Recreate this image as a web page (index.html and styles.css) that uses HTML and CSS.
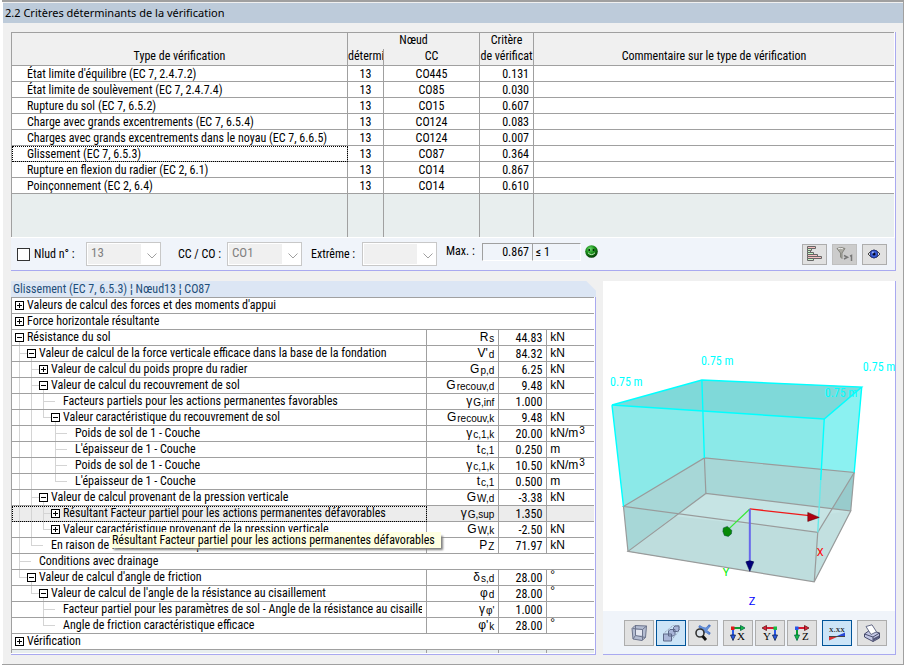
FILE: index.html
```html
<!DOCTYPE html>
<html lang="fr">
<head>
<meta charset="utf-8">
<title>2.2 Critères déterminants de la vérification</title>
<link rel="stylesheet" href="styles.css">
</head>
<body>
<div class="window">
<h1 class="titlebar">2.2 Critères déterminants de la vérification</h1>
<main class="content">

<section class="panel summary">
<table class="grid criteria">
<colgroup><col class="c-type"><col class="c-node"><col class="c-cc"><col class="c-crit"><col></colgroup>
<thead>
<tr><th rowspan="2">Type de vérification</th><th colspan="2" class="top">Nœud</th><th class="top">Critère</th><th rowspan="2">Commentaire sur le type de vérification</th></tr>
<tr><th>détermi</th><th>CC</th><th>de vérificat</th></tr>
</thead>
<tbody>
<tr><td>État limite d'équilibre (EC 7, 2.4.7.2)</td><td>13</td><td>CO445</td><td>0.131</td><td></td></tr>
<tr><td>État limite de soulèvement (EC 7, 2.4.7.4)</td><td>13</td><td>CO85</td><td>0.030</td><td></td></tr>
<tr><td>Rupture du sol (EC 7, 6.5.2)</td><td>13</td><td>CO15</td><td>0.607</td><td></td></tr>
<tr><td>Charge avec grands excentrements (EC 7, 6.5.4)</td><td>13</td><td>CO124</td><td>0.083</td><td></td></tr>
<tr><td>Charges avec grands excentrements dans le noyau (EC 7, 6.6.5)</td><td>13</td><td>CO124</td><td>0.007</td><td></td></tr>
<tr><td class="focus">Glissement (EC 7, 6.5.3)</td><td>13</td><td>CO87</td><td>0.364</td><td></td></tr>
<tr><td>Rupture en flexion du radier (EC 2, 6.1)</td><td>13</td><td>CO14</td><td>0.867</td><td></td></tr>
<tr><td>Poinçonnement (EC 2, 6.4)</td><td>13</td><td>CO14</td><td>0.610</td><td></td></tr>
<tr class="filler"><td></td><td></td><td></td><td></td><td></td></tr>
</tbody>
</table>
<div class="filterbar">
<label class="check"><input type="checkbox">Nlud n° :</label>
<span class="combo"><select disabled aria-label="Nœud"><option>13</option></select><svg width="10" height="6" viewBox="0 0 10 6"><path d="M.5.5 5 5 9.500.5"/></svg></span>
<label class="cc-label" for="cc">CC / CO :</label>
<span class="combo"><select id="cc" disabled><option>CO1</option></select><svg width="10" height="6" viewBox="0 0 10 6"><path d="M.5.5 5 5 9.500.5"/></svg></span>
<label class="ext-label" for="ext">Extrême :</label>
<span class="combo"><select id="ext" disabled><option></option></select><svg width="10" height="6" viewBox="0 0 10 6"><path d="M.5.5 5 5 9.500.5"/></svg></span>
<div class="maximum">
<span class="max-label">Max. :</span>
<output class="max-value">0.867</output><output class="max-limit">≤ 1</output>
<svg class="smiley" width="13" height="13" viewBox="0 0 13 13"><defs><radialGradient id="sm" cx=".4" cy=".3" r=".7"><stop offset="0" stop-color="#6cd86c"/><stop offset=".5" stop-color="#1a901a"/><stop offset="1" stop-color="#053c05"/></radialGradient></defs><circle cx="6.500" cy="6.500" r="6.300" fill="url(#sm)"/><path d="M3.500 4h1.500v2H3.500zM7.800 4h1.500v2H7.800z" fill="#0a2a0a"/><path d="M3 7.800q3.500 3.600 7 0" fill="none" stroke="#c8f0c0" stroke-width="1"/></svg>
</div>
<div class="actions">
<button type="button" aria-label="Diagramme"><svg width="16" height="16" viewBox="0 0 16 16"><g stroke="#666" stroke-width="1"><path d="M1.500.5h8v2h-8z" fill="#f6c0c0"/><path d="M1.500 2.500h4v2h-4z" fill="#c5f5c5"/><path d="M1.500 4.500h3v2h-3z" fill="#c5f5c5"/><path d="M1.500 6.500h6v2h-6z" fill="#c5f5c5"/><path d="M1.500 8.500h10v2h-10z" fill="#f6c0c0"/><path d="M1.500 10.500h14v2h-14z" fill="#f6c0c0"/><path d="M1.500 12.500h6v2h-6z" fill="#c5f5c5"/></g></svg></button>
<button type="button" class="off" disabled aria-label="Filtre"><svg width="17" height="16" viewBox="0 0 17 16"><path d="M1 2.500q4-2 8 0L6 7v5.500L4.500 11V7z" fill="#aaa9a2" stroke="#85857e"/><path d="M2 2.800q3-1 5 0" stroke="#eee" fill="none"/><path d="M8 9.500l3.500 1.700L8 13M14 10.200l1.500-.8V15" fill="none" stroke="#777" stroke-width="1.500"/></svg></button>
<button type="button" aria-label="Afficher"><svg width="14" height="12" viewBox="0 0 14 12"><path d="M1 6q6-8 12 0-6 8-12 0z" fill="#f4f4f0" stroke="#444" stroke-width="1"/><circle cx="7" cy="6" r="3.800" fill="#3c60d8" stroke="#1d3290"/><circle cx="7" cy="6" r="1.500" fill="#050520"/><circle cx="5.800" cy="4.600" r="1" fill="#9db8ff"/></svg></button>
</div>
</div>
</section>

<section class="details">
<h2 class="caption">Glissement (EC 7, 6.5.3) ¦ Nœud13 ¦ CO87</h2>
<div class="panel tree-panel">
<table class="grid tree">
<colgroup><col><col class="c-sym"><col class="c-val"><col class="c-unit"></colgroup>
<tbody>
<tr><td colspan="4"><div class="node"><button class="tg plus" aria-label="Développer"></button><span>Valeurs de calcul des forces et des moments d'appui</span></div></td></tr>
<tr><td colspan="4"><div class="node"><button class="tg plus" aria-label="Développer"></button><span>Force horizontale résultante</span></div></td></tr>
<tr><td><div class="node"><button class="tg minus" aria-label="Réduire"></button><span>Résistance du sol</span></div></td><td>R<sub>s</sub></td><td>44.83</td><td>kN</td></tr>
<tr><td><div class="node"><i class="mid"></i><button class="tg minus" aria-label="Réduire"></button><span>Valeur de calcul de la force verticale efficace dans la base de la fondation</span></div></td><td>V'<sub>d</sub></td><td>84.32</td><td>kN</td></tr>
<tr><td><div class="node"><i class="line"></i><i class="mid"></i><button class="tg plus" aria-label="Développer"></button><span>Valeur de calcul du poids propre du radier</span></div></td><td>G<sub>p,d</sub></td><td>6.25</td><td>kN</td></tr>
<tr><td><div class="node"><i class="line"></i><i class="mid"></i><button class="tg minus" aria-label="Réduire"></button><span>Valeur de calcul du recouvrement de sol</span></div></td><td>G<sub>recouv,d</sub></td><td>9.48</td><td>kN</td></tr>
<tr><td><div class="node"><i class="line"></i><i class="line"></i><i class="mid"></i><i></i><span>Facteurs partiels pour les actions permanentes favorables</span></div></td><td>γ<sub>G,inf</sub></td><td>1.000</td><td></td></tr>
<tr><td><div class="node"><i class="line"></i><i class="line"></i><i class="end"></i><button class="tg minus" aria-label="Réduire"></button><span>Valeur caractéristique du recouvrement de sol</span></div></td><td>G<sub>recouv,k</sub></td><td>9.48</td><td>kN</td></tr>
<tr><td><div class="node"><i class="line"></i><i class="line"></i><i></i><i class="mid"></i><i></i><span>Poids de sol de 1 - Couche</span></div></td><td>γ<sub>c,1,k</sub></td><td>20.00</td><td>kN/m<sup>3</sup></td></tr>
<tr><td><div class="node"><i class="line"></i><i class="line"></i><i></i><i class="mid"></i><i></i><span>L'épaisseur de 1 - Couche</span></div></td><td>t<sub>c,1</sub></td><td>0.250</td><td>m</td></tr>
<tr><td><div class="node"><i class="line"></i><i class="line"></i><i></i><i class="mid"></i><i></i><span>Poids de sol de 1 - Couche</span></div></td><td>γ<sub>c,1,k</sub></td><td>10.50</td><td>kN/m<sup>3</sup></td></tr>
<tr><td><div class="node"><i class="line"></i><i class="line"></i><i></i><i class="end"></i><i></i><span>L'épaisseur de 1 - Couche</span></div></td><td>t<sub>c,1</sub></td><td>0.500</td><td>m</td></tr>
<tr><td><div class="node"><i class="line"></i><i class="mid"></i><button class="tg minus" aria-label="Réduire"></button><span>Valeur de calcul provenant de la pression verticale</span></div></td><td>G<sub>W,d</sub></td><td>-3.38</td><td>kN</td></tr>
<tr class="selected"><td class="focus"><div class="node"><i class="line"></i><i class="line"></i><i class="mid"></i><button class="tg plus" aria-label="Développer"></button><span>Résultant Facteur partiel pour les actions permanentes défavorables</span></div></td><td>γ<sub>G,sup</sub></td><td>1.350</td><td></td></tr>
<tr><td><div class="node"><i class="line"></i><i class="line"></i><i class="end"></i><button class="tg plus" aria-label="Développer"></button><span>Valeur caractéristique provenant de la pression verticale</span></div><div class="tooltip" role="tooltip">Résultant Facteur partiel pour les actions permanentes défavorables</div></td><td>G<sub>W,k</sub></td><td>-2.50</td><td>kN</td></tr>
<tr><td><div class="node"><i class="line"></i><i class="end"></i><i></i><span>En raison de l'effort normal du poteau</span></div></td><td>P<sub>Z</sub></td><td>71.97</td><td>kN</td></tr>
<tr><td colspan="4"><div class="node"><i class="mid"></i><i></i><span>Conditions avec drainage</span></div></td></tr>
<tr><td><div class="node"><i class="end"></i><button class="tg minus" aria-label="Réduire"></button><span>Valeur de calcul d'angle de friction</span></div></td><td>δ<sub>s,d</sub></td><td>28.00</td><td><span class="deg">°</span></td></tr>
<tr><td><div class="node"><i></i><i class="end"></i><button class="tg minus" aria-label="Réduire"></button><span>Valeur de calcul de l'angle de la résistance au cisaillement</span></div></td><td>φ<sub>d</sub></td><td>28.00</td><td><span class="deg">°</span></td></tr>
<tr><td><div class="node"><i></i><i></i><i class="mid"></i><i></i><span>Facteur partiel pour les paramètres de sol - Angle de la résistance au cisaillement</span></div></td><td>γ<sub>φ'</sub></td><td>1.000</td><td></td></tr>
<tr><td><div class="node"><i></i><i></i><i class="end"></i><i></i><span>Angle de friction caractéristique efficace</span></div></td><td>φ'<sub>k</sub></td><td>28.00</td><td><span class="deg">°</span></td></tr>
<tr><td colspan="4"><div class="node"><button class="tg plus" aria-label="Développer"></button><span>Vérification</span></div></td></tr>
<tr class="filler"><td></td><td></td><td></td><td></td></tr>
</tbody>
</table>
</div>
</section>

<section class="panel viewer">
<svg class="scene" viewBox="603 281 292 330" role="img" aria-label="Vue 3D de la fondation">
<polygon points="612,405 702,380 862,387 854.500,472.500 818,532.500 623.500,506.500" fill="#8be9e8"/>
<polygon points="824.500,419 862,387 854.500,472.500 818,532.500" fill="#8bf1f1"/>
<polygon points="612,405 702,380 862,387 824.500,419" fill="#7fd9d9"/>
<polygon points="623.500,506.500 704.500,458 854.500,472.500 851,511 814.500,582 628,551.500" fill="#a7d7d7"/>
<polygon points="854.500,472.500 851,511 814.500,582 818,532.500" fill="#98cbcc"/>
<polygon points="628,551.500 706,493.500 851,511 814.500,582" fill="#c6e4e4"/>
<polygon points="628,551.500 674,516 818,532.500 814.500,582" fill="#bedddd"/>
<polygon points="818,532.500 829,514 851,511 814.500,582" fill="#bfdede" fill-opacity=".6"/>
<g fill="none" stroke="#999b9b" stroke-width="1.200">
<path d="M623.500 506.500 704.500 458l150 14.500L818 532.500z"/>
<path d="M628 551.500 706 493.500 851 511 814.500 582z"/>
<path d="M623.500 506.500 628 551.500M704.500 458l1.500 35.500M854.500 472.500 851 511M818 532.500l-3.500 49.500"/>
</g>
<g fill="none" stroke="#00ffff" stroke-width="1.400">
<path d="M612 405 702 380l160 7-37.500 32z"/>
<path d="M612 405l11.500 101.500M702 380l2.500 78M862 387l-7.500 85.500M824.500 419 821 480"/>
<path d="M821 480l-3 52.500" stroke="#66e9e9"/>
</g>
<path d="M750 509 812 516" stroke="#f01818" stroke-width="1.300"/>
<path d="M808 512.500v9l11.500-4z" fill="#b00010" stroke="#500" stroke-width=".5"/>
<path d="M750 509 729 529" stroke="#38e838" stroke-width="1.300"/>
<path d="M723.500 528l4-1.500 4.500 4-.5 3.500-3 2.500-4-1-1.500-4z" fill="#078a07" stroke="#043" stroke-width=".5"/>
<path d="M750 509v54" stroke="#6868ec" stroke-width="2"/>
<path d="M746 562q4-2 8 0l-4 9.500z" fill="#00007a" stroke="#000040" stroke-width=".5"/>
<g class="dim"><text x="610" y="386">0.75 m</text><text x="701" y="365">0.75 m</text><text x="863" y="371">0.75 m</text><text x="825" y="397">0.75 m</text></g>
<text class="axis ax-x" x="817" y="556">X</text><text class="axis ax-y" x="723" y="576">Y</text><text class="axis ax-z" x="749" y="605">Z</text>
</svg>
<div class="toolbar">
<div class="group">
<button type="button" aria-label="Filaire"><svg width="18" height="18" viewBox="0 0 18 18"><path d="M2 4.500 5 1.500 16.500 2 15.500 13.500 12 16.500 3 15z" fill="#b4bdd2" stroke="#6c748c"/><path d="M2.500 4.500 12.500 5.500V16M12.500 5.500 16.500 2M5.500 2v9.500L3 15M5.500 11.500 15.500 13.500" fill="none" stroke="#6c748c"/><path d="M6 6h6v5.500L6 11z" fill="#e4e7f0"/></svg></button>
<button type="button" class="on" aria-label="Volumes"><svg width="18" height="18" viewBox="0 0 18 18"><path d="M1.500 9.500 11 1.500h6V7l-7.500 9" fill="none" stroke="#8a92a8" stroke-dasharray="1 1"/><path d="M11.500 3.500 13 2h4v4l-1.500 1.500h-4zM6.500 7 8 5.500h5v5L11.500 12h-5zM1.500 10h8v7h-8z" fill="#a9b6d8" stroke="#5c6888"/></svg></button>
<button type="button" aria-label="Zoom"><svg width="18" height="18" viewBox="0 0 18 18"><path d="M5 2 16 10M16 1 8 10" stroke="#4470c4" stroke-width="2.600"/><path d="M5 2l7 1.500 4-2-3 5 3 4-7-3z" fill="#6690d8"/><circle cx="6" cy="9" r="4" fill="#dde3ea" stroke="#333" stroke-width="1.600"/><path d="M8.500 12l3.500 4" stroke="#111" stroke-width="2.800"/></svg></button>
</div>
<div class="group">
<button type="button" aria-label="Vue X"><svg width="18" height="18" viewBox="0 0 18 18"><path d="M3 4h9" stroke="#0a9e32" stroke-width="2"/><path d="M11.500 1.500 16 4l-4.500 2.500z" fill="#17bd45" stroke="#064" stroke-width=".8"/><path d="M4 4v8" stroke="#2858e8" stroke-width="2"/><path d="M1.500 11h5L4 16.500z" fill="#2858e8" stroke="#124" stroke-width=".8"/><path d="M2 2.500h3.500V6H2z" fill="#e01818"/><text x="8" y="16" class="glyph">X</text></svg></button>
<button type="button" aria-label="Vue Y"><svg width="18" height="18" viewBox="0 0 18 18"><path d="M6 4h8" stroke="#d81830" stroke-width="2"/><path d="M5.500 1.500 1 4l4.500 2.500z" fill="#e02038" stroke="#611" stroke-width=".8"/><path d="M14 4v8" stroke="#2858e8" stroke-width="2"/><path d="M11.500 11h5L14 16.500z" fill="#2858e8" stroke="#124" stroke-width=".8"/><path d="M12.500 2.500H16V6h-3.500z" fill="#17bd45"/><text x="2" y="16" class="glyph">Y</text></svg></button>
<button type="button" aria-label="Vue Z"><svg width="18" height="18" viewBox="0 0 18 18"><path d="M3 4h9" stroke="#d81830" stroke-width="2"/><path d="M11.500 1.500 16 4l-4.500 2.500z" fill="#e02038" stroke="#611" stroke-width=".8"/><path d="M4 4v8" stroke="#0a9e32" stroke-width="2"/><path d="M1.500 11h5L4 16.500z" fill="#17bd45" stroke="#064" stroke-width=".8"/><path d="M2 2.500h3.500V6H2z" fill="#2858e8"/><text x="9" y="16" class="glyph">Z</text></svg></button>
</div>
<button type="button" class="on" aria-label="Valeurs"><svg width="18" height="18" viewBox="0 0 18 18"><text x="1" y="8" class="small-glyph">x.xx</text><path d="M1 12.500h16" stroke="#444"/><path d="M1 16.500V13h8z" fill="#d83030"/><path d="M17 8.500V12H9z" fill="#2848d8"/></svg></button>
<button type="button" aria-label="Imprimer"><svg width="18" height="18" viewBox="0 0 18 18"><path d="M1.500 10 7 6l9.500 3v5L10 17.500 1.500 13z" fill="#c3c7e4" stroke="#484c6c"/><path d="M1.500 10 10 13l6.500-4M10 13v4.500" fill="none" stroke="#484c6c"/><path d="M3 2.500 9 .8l4.500 7L8 10.500z" fill="#fff" stroke="#666c88"/><path d="M10 14.500l6-3v2.500L10 17z" fill="#55597c"/></svg></button>
</div>
</section>
</main>
</div>
</body>
</html>
```
FILE: styles.css
```css
* { box-sizing: border-box; }

body {
  margin: 0;
  padding: 0 2px 2px;
  background: #fff;
  color: #000;
  font: 12px/15px "Roboto Condensed", "Liberation Sans Narrow", Roboto, sans-serif;
}

.window {
  min-height: calc(100vh - 2px);
  border: solid #a0a0a0;
  border-width: 2px 1px 1px 0;
  padding-top: 1px;
  background: #f0f0f0;
  box-shadow: inset 1px 0 #fff;
}

.titlebar {
  margin: 0 0 0 1px;
  padding-left: 2px;
  background: #bdcbda;
  font: 11px/20px "Noto Sans", sans-serif;
}

.content {
  display: grid;
  grid-template-columns: minmax(0, 2fr) minmax(0, 1fr);
  gap: 10px 7px;
  padding: 9px 7px 9px 9px;
}

.panel {
  border: solid #a9a9f0;
  border-width: 0 1px 1px 0;
}

.summary {
  grid-column: 1 / -1;
  background: #fff;
}

/* tables */
.grid {
  width: calc(100% - 1px);
  table-layout: fixed;
  border-spacing: 0;
  border: solid #a0a0a0;
  border-width: 1px 0 0 1px;
  background: #fff;
}

.grid th,
.grid td {
  height: 16px;
  padding: 0;
  border: solid #a0a0a0;
  border-width: 0 1px 1px 0;
  line-height: 15px;
  white-space: nowrap;
}

.grid th:last-child,
.grid td:last-child { border-right: 0; }

.criteria tr:nth-child(2) th:last-child { border-right: 1px solid #a0a0a0; }

.criteria th {
  height: 17px;
  padding-bottom: 1px;
  background: #f0f0f0;
  font-weight: normal;
  vertical-align: bottom;
  overflow: hidden;
}

.criteria th.top {
  height: 16px;
  border-bottom: 0;
}

.c-type { width: 336px; }
.c-node { width: 36px; }
.c-cc { width: 96px; }
.c-crit { width: 54px; }

.criteria td {
  padding-top: 1px;
  line-height: 14px;
  text-align: center;
}

.criteria td:first-child { padding-left: 15px; text-align: left; }
.criteria td:nth-child(4) { padding-right: 4px; text-align: right; }

.grid .filler td {
  height: 43px;
  padding: 0;
  border-bottom: 0;
  background: #e8eeee;
}

td.focus {
  outline: 1px dotted #000;
  outline-offset: -1px;
}

/* filter bar */
.filterbar {
  display: flex;
  align-items: center;
  height: 33px;
  padding: 0 8px 0 6px;
  border-top: 1px solid #fff;
  background: #f0f4fa;
}

.check {
  display: flex;
  align-items: center;
  gap: 4px;
  width: 69px;
}

.check input {
  appearance: none;
  width: 13px;
  height: 13px;
  margin: 0;
  border: 1px solid #333;
  background: #fff;
}

.combo {
  position: relative;
  width: 75px;
  height: 24px;
}

.combo select {
  appearance: none;
  width: 100%;
  height: 100%;
  margin: 0;
  padding: 0 20px 2px 4px;
  border: 1px solid #c8c8c8;
  border-radius: 0;
  outline: 1px solid #fff;
  outline-offset: -2px;
  background: linear-gradient(90deg, #f0f0f0 54px, #fff 54px);
  color: #808080;
  font: 13px/18px "Roboto Condensed", Roboto, sans-serif;
  opacity: 1;
}

.combo svg {
  position: absolute;
  right: 4px;
  bottom: 7px;
  fill: none;
  stroke: #a0a0a0;
}

.cc-label { width: 66px; padding-left: 17px; }
.ext-label { width: 60px; padding-left: 9px; }

.maximum {
  display: flex;
  align-items: center;
  padding: 0 0 5px 9px;
}

.max-label { width: 36px; }

.max-value,
.max-limit {
  height: 18px;
  border: 1px solid;
  border-color: #a0a0a0 #fff #fff #a0a0a0;
  line-height: 17px;
}

.max-value { width: 50px; padding-right: 3px; border-right: 0; text-align: right; }
.max-limit { width: 49px; padding-left: 3px; }
.smiley { margin-left: 4px; }

.actions {
  display: flex;
  gap: 5px;
  margin-left: auto;
}

.actions button,
.toolbar button {
  display: grid;
  place-items: center;
  width: 25px;
  height: 21px;
  padding: 0;
  border: 1px solid #adadad;
  background: #e1e1e1;
}

.actions .off {
  border-color: #bfbfbf;
  background: #ccc;
}

/* detail tree */
.caption {
  margin: 0;
  height: 16px;
  padding-left: 2px;
  background: #dce6f4;
  clip-path: polygon(0 0, calc(100% - 10px) 0, 100% 10px, 100% 100%, 0 100%);
  color: #1f4e79;
  font: inherit;
  line-height: 16px;
}

.tree-panel {
  padding-bottom: 1px;
  background: #fff;
}

.c-sym { width: 72px; }
.c-val { width: 48px; }
.c-unit { width: 47px; }

.tree td:nth-child(2) {
  padding-right: 4px;
  font-family: "Liberation Sans", sans-serif;
  text-align: right;
}

.tree td:nth-child(3) {
  padding-top: 1px;
  padding-right: 4px;
  line-height: 14px;
  text-align: right;
}

.tree td:nth-child(4) {
  padding-left: 3px;
  font-family: "Liberation Sans", sans-serif;
}

.tree td:first-child { position: relative; }

sub, sup {
  position: relative;
  font-size: 10px;
  line-height: 0;
  vertical-align: baseline;
}

sub { top: 1px; margin-left: 1px; }
sup { bottom: 3px; margin-left: 1px; }

.deg {
  display: block;
  padding-bottom: 4px;
  line-height: 11px;
}

.tree .filler td { height: 3px; }
.selected td { background: #ececec; }

.node {
  display: flex;
  align-items: center;
  height: 15px;
  margin-right: 4px;
  padding-left: 1px;
  overflow: hidden;
}

.node span { margin-left: 2px; }

.node i {
  position: relative;
  flex: none;
  width: 12px;
  height: 15px;
}

.line::before,
.mid::before,
.end::before,
.mid::after,
.end::after {
  content: "";
  position: absolute;
  top: 0;
  left: 6px;
  width: 1px;
  height: 15px;
  background: #d4d4d4;
}

.end::before { height: 8px; }

.mid::after,
.end::after {
  top: 7px;
  width: 12px;
  height: 1px;
}

.tg {
  position: relative;
  flex: none;
  width: 9px;
  height: 9px;
  margin: 0 1px 0 2px;
  padding: 0;
  border: 1px solid #000;
  background:
    linear-gradient(#000, #000) center / 5px 1px no-repeat,
    #fff;
}

.plus {
  background:
    linear-gradient(#000, #000) center / 5px 1px no-repeat,
    linear-gradient(#000, #000) center / 1px 5px no-repeat,
    #fff;
}

.minus::after {
  content: "";
  position: absolute;
  top: 8px;
  left: 3px;
  width: 1px;
  height: 4px;
  background: #d4d4d4;
}

.tooltip {
  position: absolute;
  z-index: 1;
  top: 10px;
  left: 98px;
  padding: 1px 6px 0 2px;
  background: #ffffe1;
  box-shadow: 3px 3px 2px -1px #808080;
}

/* 3D view */
.viewer {
  display: flex;
  flex-direction: column;
  background: #fff;
}

.scene {
  flex: 1;
  width: 100%;
  min-height: 0;
}

.dim { fill: #00ffff; font: 12px "Roboto Condensed", Roboto, sans-serif; }
.axis { font: 11px Roboto, sans-serif; }
.ax-x { fill: #f00; }
.ax-y { fill: #0e0; }
.ax-z { fill: #00f; }

.toolbar {
  display: flex;
  justify-content: flex-end;
  align-items: center;
  gap: 5px;
  height: 43px;
  padding-right: 8px;
  background: #f0f4fa;
}

.group { display: flex; gap: 2px; }

.toolbar button {
  width: 30px;
  height: 26px;
}

.toolbar .on {
  border-color: #005499;
  background: #cce4f7;
}

.glyph { font: 11px "Liberation Serif", serif; }
.small-glyph { font: 9px "Liberation Serif", serif; }
```
